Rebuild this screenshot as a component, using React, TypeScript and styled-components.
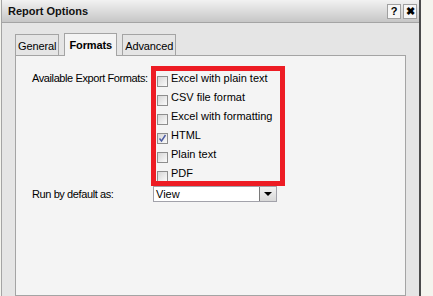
import styled, { createGlobalStyle } from 'styled-components';

const GlobalStyle = createGlobalStyle`
  html, body {
    margin: 0;
    padding: 0;
    background: #f4f4ee;
  }

  body {
    font-family: 'Liberation Sans', Arial, sans-serif;
    font-size: 11px;
    color: #000;
  }
`;

const Dialog = styled.div`
  display: flex;
  flex-direction: column;
  width: 417px;
  height: 296px;
  margin-left: 1px;
  overflow: hidden;

  background: #e5e5e5;
  border-left: 1px solid #a4a4a4;
  border-right: 2px solid #4a4a4a;
`;

const TitleBar = styled.div`
  display: flex;
  align-items: center;
  justify-content: space-between;
  flex: 0 0 auto;

  height: 22px;
  padding: 0 2px 0 6px;

  background: linear-gradient(#f2f2f2, #c6c6c6);
  border-bottom: 1px solid #a4a4a4;
`;

const Title = styled.span`
  font-weight: bold;
  font-size: 11px;
  color: #111;
`;

const TitleButtons = styled.div`
  display: flex;
  gap: 2px;
`;

const TitleButton = styled.div`
  display: flex;
  align-items: center;
  justify-content: center;

  width: 12px;
  height: 13px;

  background: #f6f6f6;
  border: 1px solid #a0a0a0;

  font-weight: bold;
  font-size: 11px;
  line-height: 1;
`;

const Body = styled.div`
  display: flex;
  flex-direction: column;
  flex: 1 1 auto;
  padding: 10px 13px 0;
`;

const TabRow = styled.div`
  display: flex;
  align-items: flex-end;
  gap: 5px;
  height: 22px;
`;

const Tab = styled.div<{ $active?: boolean }>`
  position: relative;
  z-index: ${({ $active }) => ($active ? 1 : 0)};

  display: flex;
  align-items: center;

  height: ${({ $active }) => ($active ? '22px' : '19px')};
  margin-bottom: ${({ $active }) => ($active ? '-1px' : '0')};
  padding: 0 ${({ $active }) => ($active ? '4px' : '2px')};
  padding-top: ${({ $active }) => ($active ? '0' : '1px')};

  background: ${({ $active }) => ($active ? '#f4f4f4' : '#e5e5e5')};
  border: 1px solid #a4a4a4;
  border-bottom: none;

  font-weight: ${({ $active }) => ($active ? 'bold' : 'normal')};
  letter-spacing: -0.1px;
`;

const Panel = styled.div`
  flex: 1 1 auto;
  padding: 16px 16px 0;

  background: #f4f4f4;
  border: 1px solid #a4a4a4;
`;

const FormGrid = styled.div`
  display: grid;
  grid-template-columns: 121px 1fr;
  align-items: start;
`;

const FieldLabel = styled.div<{ $offset?: number }>`
  line-height: 13px;
  padding-top: ${({ $offset }) => $offset ?? 0}px;
  white-space: nowrap;
  letter-spacing: -0.4px;
`;

const OptionList = styled.div`
  position: relative;
  width: 122px;
  margin-left: 4px;
`;

const Highlight = styled.div`
  position: absolute;
  left: -6px;
  top: -6px;
  width: 124px;
  height: 110px;

  border: 5px solid #ed1c24;
  pointer-events: none;
`;

const OptionRow = styled.label`
  display: flex;
  align-items: flex-start;
  gap: 3px;
  height: 19px;
`;

const CheckBox = styled.span`
  display: flex;
  align-items: center;
  justify-content: center;
  flex: 0 0 auto;

  width: 9px;
  height: 9px;
  margin-top: 4px;

  background: linear-gradient(135deg, #d6d6d6, #fbfbfb);
  border: 1px solid #8e8e8e;
`;

const OptionText = styled.span`
  line-height: 13px;
  white-space: nowrap;
`;

const Select = styled.div`
  display: flex;
  align-items: stretch;

  width: 122px;
  height: 14px;

  background: #fff;
  border: 1px solid #a2a2aa;
`;

const SelectValue = styled.span`
  flex: 1 1 auto;
  padding-left: 2px;
  line-height: 14px;
`;

const SelectButton = styled.span`
  display: flex;
  align-items: center;
  justify-content: center;

  width: 16px;

  background: linear-gradient(#f2f2f2, #d8d8d8);
  border-left: 1px solid #7a7a7a;

  &::after {
    content: '';
    border-left: 4px solid transparent;
    border-right: 4px solid transparent;
    border-top: 4px solid #000;
  }
`;

const formats = [
  { label: 'Excel with plain text', checked: false },
  { label: 'CSV file format', checked: false },
  { label: 'Excel with formatting', checked: false },
  { label: 'HTML', checked: true },
  { label: 'Plain text', checked: false },
  { label: 'PDF', checked: false },
];

const CheckMark = () => (
  <svg width='9' height='9' viewBox='0 0 9 9'>
    <path d='M1.5 4.5 L3.5 7 L7.5 1' fill='none' stroke='#4b5ba3' strokeWidth='1.4' />
  </svg>
);

const App = () => {
  return (
    <>
      <GlobalStyle />
      <Dialog>
        <TitleBar>
          <Title>Report Options</Title>
          <TitleButtons>
            <TitleButton>?</TitleButton>
            <TitleButton>✖</TitleButton>
          </TitleButtons>
        </TitleBar>
        <Body>
          <TabRow>
            <Tab>General</Tab>
            <Tab $active>Formats</Tab>
            <Tab>Advanced</Tab>
          </TabRow>
          <Panel>
            <FormGrid>
              <FieldLabel>Available Export Formats:</FieldLabel>
              <OptionList>
                <Highlight />
                {formats.map((format) => (
                  <OptionRow key={format.label}>
                    <CheckBox>{format.checked && <CheckMark />}</CheckBox>
                    <OptionText>{format.label}</OptionText>
                  </OptionRow>
                ))}
              </OptionList>
              <FieldLabel $offset={2}>Run by default as:</FieldLabel>
              <Select>
                <SelectValue>View</SelectValue>
                <SelectButton />
              </Select>
            </FormGrid>
          </Panel>
        </Body>
      </Dialog>
    </>
  );
};

export default App;
